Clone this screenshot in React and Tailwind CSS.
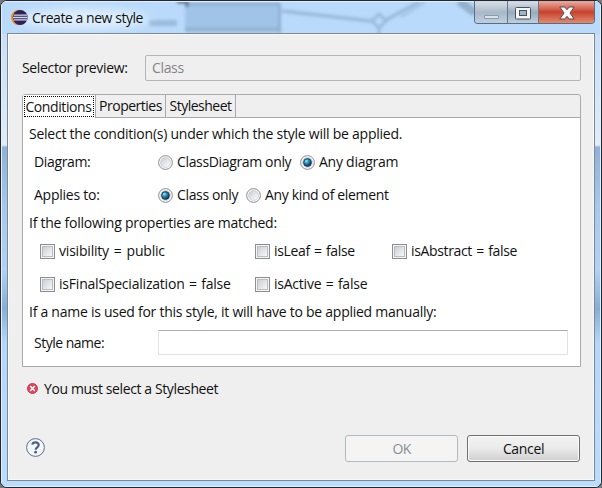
import React from "react";

function Radio({ checked, label, className, track = "tracking-[-0.35px]" }) {
  return (
    <label className={`flex shrink-0 items-center ${className}`}>
      <svg width="15" height="15" viewBox="0 0 15 15" className="mr-[4px] shrink-0">
        <defs>
          <linearGradient id="rg" x1="0" y1="0" x2="1" y2="1">
            <stop offset="0.15" stopColor="#cfd2d6" />
            <stop offset="0.9" stopColor="#fbfbfb" />
          </linearGradient>
          <radialGradient id="rb" cx="0.35" cy="0.32" r="0.7">
            <stop offset="0" stopColor="#b9ecfa" />
            <stop offset="0.35" stopColor="#2d9cc6" />
            <stop offset="1" stopColor="#0b2d4b" />
          </radialGradient>
        </defs>
        <circle cx="7.5" cy="7.5" r="6.9" fill="#fafafa" stroke="#8b8d90" strokeWidth="1" />
        <circle cx="7.5" cy="7.5" r="4.9" fill="url(#rg)" stroke="#c2c5c9" strokeWidth="0.7" />
        {checked && <circle cx="7.5" cy="7.5" r="3.9" fill="url(#rb)" stroke="#123a58" strokeWidth="0.9" />}
      </svg>
      <span className={track}>{label}</span>
    </label>
  );
}

function Check({ label, track }) {
  return (
    <label className="flex shrink-0 items-center">
      <span className="mr-[4px] flex size-[15px] shrink-0 items-center justify-center border border-[#8b8d90] bg-[#f5f5f5]">
        <span className="size-[11px] border border-[#b9bdc2] bg-linear-to-br from-[#cbcfd4] to-[#f8f8f8]" />
      </span>
      <span className={track}>{label}</span>
    </label>
  );
}

function Backdrop() {
  return (
    <svg className="absolute inset-0" width="602" height="488" viewBox="0 0 602 488">
      <defs>
        <filter id="soft" x="-20%" y="-20%" width="140%" height="140%">
          <feGaussianBlur stdDeviation="1.8" />
        </filter>
        <filter id="wide" x="-50%" y="-50%" width="200%" height="200%">
          <feGaussianBlur stdDeviation="5" />
        </filter>
        <linearGradient id="side" x1="0" y1="0" x2="0" y2="1">
          <stop offset="0" stopColor="#b9d6f1" />
          <stop offset="0.05" stopColor="#c5dff8" />
          <stop offset="0.27" stopColor="#dcebf9" />
          <stop offset="0.295" stopColor="#e2edf8" />
          <stop offset="0.3" stopColor="#8fb3d8" />
          <stop offset="0.42" stopColor="#a5c8ec" />
          <stop offset="0.55" stopColor="#b0d3f5" />
          <stop offset="0.63" stopColor="#88aed8" />
          <stop offset="0.7" stopColor="#b3d7fb" />
          <stop offset="1" stopColor="#badcfd" />
        </linearGradient>
      </defs>
      <rect width="602" height="488" fill="url(#side)" />
      <rect width="602" height="33" fill="#b9dafa" />
      <g filter="url(#soft)">
        <rect x="184" y="2" width="95" height="30" fill="#a0c4e7" />
        <path d="M184 3h95M184 28h95M278.500 3v29" stroke="#8fb0d0" strokeWidth="3" />
        <path d="M176 1h10v5" fill="none" stroke="#5f7690" strokeWidth="3" />
        <path d="M281 10 L370 20 M385 19 L418 1" fill="none" stroke="#99badb" strokeWidth="3.500" />
        <path d="M378 13 l7 7 l-7 7 l-7 -7 z M378 27 v8" fill="none" stroke="#99badb" strokeWidth="3" />
        <path d="M400 16 L424 1" stroke="#a5c6e6" strokeWidth="3" />
        <path d="M458 0 L474 12" stroke="#93b0cd" strokeWidth="8" />
        <path d="M148 22 h28" stroke="#9bbcdd" strokeWidth="6" />
      </g>
      <ellipse cx="82" cy="18" rx="66" ry="10" fill="#e0effd" filter="url(#wide)" />
    </svg>
  );
}

function WindowButtons() {
  return (
    <div className="flex h-[23px] w-[121px] shrink-0 overflow-hidden rounded-b-[4px] border border-t-0 border-[#5e6c7c]">
      <div className="flex w-[33px] items-center justify-center border-r border-[#66788c] bg-linear-to-b from-[#d0d9e3] from-10% via-[#a9b8c8] via-52% to-[#bdd0e2]">
        <svg width="17" height="21" viewBox="0 0 17 21">
          <rect x="1.500" y="13.5" width="14" height="3" rx="0.500" fill="#dce1e6" stroke="#8e9aa7" />
        </svg>
      </div>
      <div className="flex w-[31px] items-center justify-center border-r border-[#66788c] bg-linear-to-b from-[#d0d9e3] from-10% via-[#9aabbc] via-52% to-[#bdd0e2]">
        <svg width="18" height="21" viewBox="0 0 18 21">
          <rect x="1.500" y="5.500" width="15" height="11.500" rx="1" fill="#f5f5f5" stroke="#4a5059" />
          <rect x="5.500" y="8.500" width="7" height="5" fill="#9fb4c9" stroke="#4a5059" />
        </svg>
      </div>
      <div className="flex flex-1 items-center justify-center bg-linear-to-b from-[#e5a498] from-5% via-[#c9402a] via-50% to-[#e08a70]">
        <svg width="18" height="21" viewBox="0 0 18 21">
          <path d="M1.800 5h5L9 7.700 11.200 5h5l-4.200 6 4.200 6h-5L9 14.300 6.800 17h-5L6 11z" fill="#f8f8f8" stroke="#5a4750" strokeWidth="1" strokeLinejoin="round" />
        </svg>
      </div>
    </div>
  );
}

export default function App() {
  return (
    <div className="relative h-[488px] w-[602px] overflow-hidden bg-[#777] font-['Open_Sans','Noto_Sans',sans-serif] text-[14px] leading-[20px] text-[#111]">
      <div className="relative h-[488px] w-[602px] overflow-hidden rounded-[7px] border border-[#23262e]">
        <Backdrop />
        <div className="relative flex h-full flex-col px-[6px] pb-[6px] shadow-[inset_0_0_0_1px_#e3f0fc]">
          <header className="flex h-[32px] shrink-0 items-start pl-[4px]">
            <svg width="17" height="17" viewBox="0 0 17 17" className="mt-[8px] shrink-0">
              <circle cx="7.800" cy="8.500" r="7.800" fill="#f0932b" />
              <circle cx="9.200" cy="8.500" r="7.500" fill="#2c2255" />
              <path d="M2.500 6.200h13.500M2 8.500h14.500M2.500 10.800h13.500" stroke="#d9dcf0" strokeWidth="1.300" />
            </svg>
            <h1 className="mt-[7px] ml-[4px] flex-1 tracking-[-0.45px]">Create a new style</h1>
            <WindowButtons />
          </header>
          <main className="flex flex-1 flex-col border border-[#7d8894] bg-[#efefef] pr-[13px] pl-[14px] shadow-[inset_0_0_0_1px_#fafafa]">
            <div className="mt-[21px] flex h-[26px] items-center">
              <span className="w-[123px] tracking-[-0.35px]">Selector preview:</span>
              <div className="flex h-[26px] flex-1 items-center rounded-[2px] border border-[#b5b5b5] pl-[6px] tracking-[-0.35px] text-[#858585]">Class</div>
            </div>
            <section className="mt-[13px] flex h-[273px] flex-col rounded-t-[3px] border border-[#aaaaaa]">
              <div className="flex h-[23px] shrink-0">
                <div className="flex w-[72px] bg-white p-px">
                  <span className="flex flex-1 items-center justify-center border border-dotted border-black pr-px tracking-[-0.4px]">Conditions</span>
                </div>
                <div className="flex flex-1 border-b border-[#aaaaaa]">
                  <span className="flex w-[71px] items-center justify-center border-x border-[#aaaaaa] tracking-[-0.5px]">Properties</span>
                  <span className="flex w-[70px] items-center justify-center border-r border-[#aaaaaa] tracking-[-0.5px]">Stylesheet</span>
                </div>
              </div>
              <div className="flex flex-1 flex-col bg-white pr-[12px] pl-[6px]">
                <p className="mt-[6px] whitespace-nowrap tracking-[-0.24px]">Select the condition(s) under which the style will be applied.</p>
                <div className="mt-[8px] flex h-[20px] items-center pl-[5px]">
                  <span className="w-[124px] tracking-[-0.35px]">Diagram:</span>
                  <Radio label="ClassDiagram only" className="w-[142px]" />
                  <Radio checked label="Any diagram" className="" track="tracking-[-0.25px]" />
                </div>
                <div className="mt-[13px] flex h-[20px] items-center pl-[5px]">
                  <span className="w-[124px] tracking-[-0.25px]">Applies to:</span>
                  <Radio checked label="Class only" className="w-[88px]" />
                  <Radio label="Any kind of element" className="" />
                </div>
                <p className="mt-[8px] whitespace-nowrap tracking-[-0.25px]">If the following properties are matched:</p>
                <div className="mt-[8px] grid grid-cols-[215px_137px_1fr] gap-y-[13px] pl-[11px] whitespace-nowrap">
                  <Check label="visibility = public" track="tracking-[-0.2px] [word-spacing:1.5px]" />
                  <Check label="isLeaf = false" track="tracking-[-0.35px] [word-spacing:1px]" />
                  <Check label="isAbstract = false" track="tracking-[-0.35px] [word-spacing:1px]" />
                  <Check label="isFinalSpecialization = false" track="tracking-[-0.21px] [word-spacing:1px]" />
                  <Check label="isActive = false" track="tracking-[-0.23px] [word-spacing:1px]" />
                </div>
                <p className="mt-[8px] whitespace-nowrap tracking-[-0.26px]">If a name is used for this style, it will have to be applied manually:</p>
                <div className="mt-[8px] flex h-[25px] items-center pl-[5px]">
                  <span className="w-[124px] tracking-[-0.5px]">Style name:</span>
                  <div className="h-[25px] flex-1 rounded-[1px] border border-[#e2e3ea] border-t-[#abadb3] bg-white" />
                </div>
              </div>
            </section>
            <div className="mt-[12px] flex h-[20px] items-center pl-[5px]">
              <svg width="11" height="11" viewBox="0 0 11 11" className="mr-[6px] mb-[2px] shrink-0">
                <circle cx="5.500" cy="5.500" r="5" fill="#e0455a" stroke="#c93a50" />
                <path d="M3.200 3l4.600 5M7.800 3l-4.600 5" stroke="#fff" strokeWidth="1.500" />
              </svg>
              <span className="tracking-[-0.39px]">You must select a Stylesheet</span>
            </div>
            <footer className="mt-[36px] flex h-[27px] items-center pr-px pl-[4px]">
              <svg width="19" height="19" viewBox="0 0 19 19" className="mb-[2px] shrink-0">
                <circle cx="9.500" cy="9.500" r="8.900" fill="#f5f6f9" stroke="#5b6d8e" strokeWidth="1" />
                <path d="M6.300 6.700C6.500 4.900 7.900 4.300 9.500 4.300c1.900 0 3.200 1 3.200 2.700 0 2.200-3 2.400-3 4.700" fill="none" stroke="#4c5f84" strokeWidth="2.200" />
                <circle cx="9.600" cy="14.200" r="1.400" fill="#4c5f84" />
              </svg>
              <span className="flex-1" />
              <button className="mr-[9px] h-[27px] w-[113px] rounded-[3px] border border-[#b4b9be] bg-[#f4f4f4] tracking-[-0.8px] text-[#8b8f93]">OK</button>
              <button className="h-[27px] w-[113px] rounded-[3px] border border-[#707070] bg-linear-to-b from-[#f3f3f3] from-0% via-[#ebebeb] via-48% to-[#cfcfcf] tracking-[-0.35px] shadow-[inset_0_0_0_1px_#fafafa]">Cancel</button>
            </footer>
          </main>
        </div>
      </div>
    </div>
  );
}
